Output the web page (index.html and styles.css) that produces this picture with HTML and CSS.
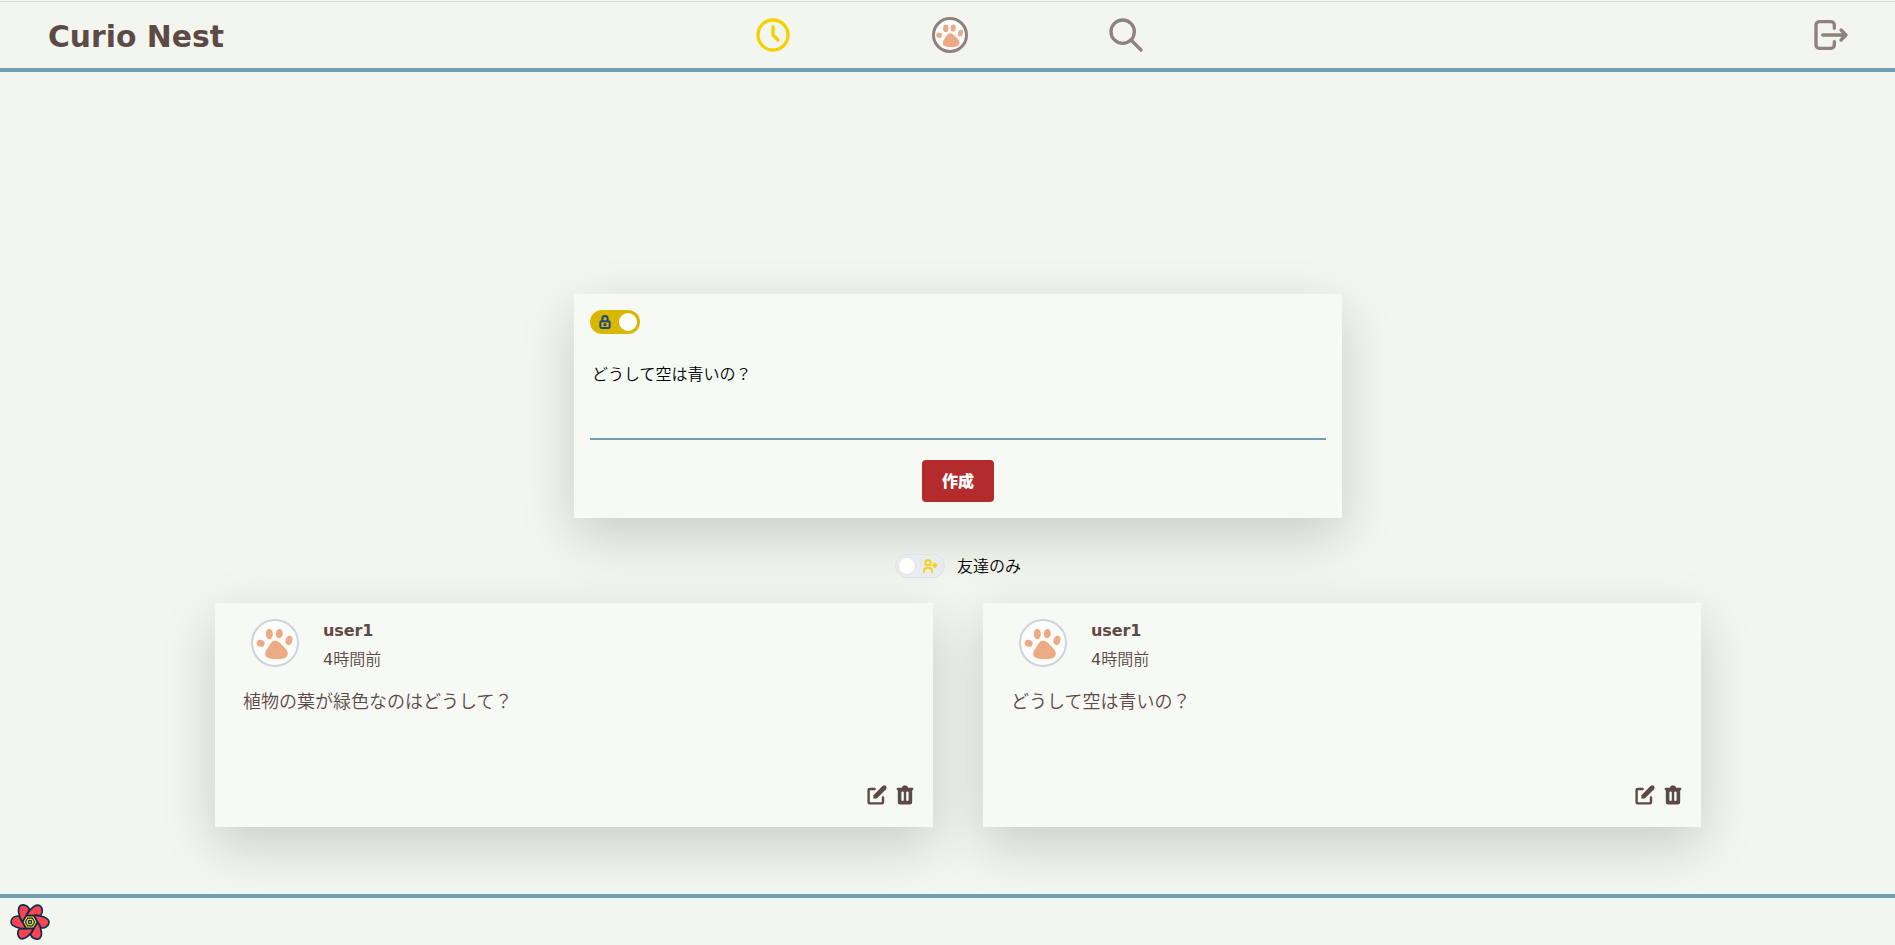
FILE: index.html
```html
<!DOCTYPE html>
<html lang="ja">
<head>
<meta charset="utf-8">
<title>Curio Nest</title>
<link rel="stylesheet" href="styles.css">
</head>
<body>
<svg class="defs" aria-hidden="true">
  <symbol id="paw" viewBox="0 0 144 144">
    <ellipse cx="29" cy="73" rx="12" ry="10.5" transform="rotate(20 29 73)"/>
    <ellipse cx="55" cy="45" rx="10.5" ry="15.5"/>
    <ellipse cx="85" cy="44" rx="10.5" ry="14" transform="rotate(8 85 44)"/>
    <ellipse cx="114" cy="64" rx="10" ry="14" transform="rotate(16 114 64)"/>
    <path d="M72 65C83 65 88 72 95 80C104 88 112 96 110 107C108 119 91 120 77 120C61 120 45 118 43 107C42 95 51 87 56 78C60 71 64 65 72 65Z"/>
  </symbol>
  <symbol id="edit" viewBox="0 0 20 20">
    <path d="M17.414 2.586a2 2 0 00-2.828 0L7 10.172V13h2.828l7.586-7.586a2 2 0 000-2.828z"/>
    <path d="M2 6a2 2 0 012-2h4a1 1 0 010 2H4v10h10v-4a1 1 0 112 0v4a2 2 0 01-2 2H4a2 2 0 01-2-2V6z"/>
  </symbol>
  <symbol id="trash" viewBox="0 0 20 20">
    <path fill-rule="evenodd" d="M9 2a1 1 0 00-.894.553L7.382 4H4a1 1 0 000 2v10a2 2 0 002 2h8a2 2 0 002-2V6a1 1 0 100-2h-3.382l-.724-1.447A1 1 0 0011 2H9zM7 8a1 1 0 012 0v6a1 1 0 11-2 0V8zm5-1a1 1 0 00-1 1v6a1 1 0 102 0V8a1 1 0 00-1-1z"/>
  </symbol>
</svg>

<header class="header">
  <h1 class="brand">Curio Nest</h1>
  <nav class="nav">
    <svg class="line-icon active" viewBox="0 0 24 24"><circle cx="12" cy="12" r="9"/><path d="M12 7v5l3 3"/></svg>
    <span class="avatar avatar-small"><svg><use href="#paw"/></svg></span>
    <svg class="line-icon" viewBox="0 0 24 24"><circle cx="10" cy="10" r="7"/><path d="M21 21l-6-6"/></svg>
  </nav>
  <svg class="line-icon logout" viewBox="0 0 24 24"><path d="M14 8V6a2 2 0 0 0-2-2H5a2 2 0 0 0-2 2v12a2 2 0 0 0 2 2h7a2 2 0 0 0 2-2v-2"/><path d="M7 12h14l-3-3m0 6l3-3"/></svg>
</header>

<main class="main">
  <form class="composer card">
    <div class="switch switch-on">
      <svg class="switch-icon" viewBox="0 0 24 24"><rect x="5" y="11" width="14" height="10" rx="2"/><circle cx="12" cy="16" r="1"/><path d="M8 11V7a4 4 0 0 1 8 0v4"/></svg>
      <span class="thumb"></span>
    </div>
    <div class="question-input">どうして空は青いの？</div>
    <button class="submit" type="button">作成</button>
  </form>

  <div class="filter">
    <div class="switch switch-off">
      <span class="thumb"></span>
      <svg class="switch-icon" viewBox="0 0 24 24"><circle cx="9" cy="7" r="4"/><path d="M3 21v-2a4 4 0 0 1 4-4h4a4 4 0 0 1 4 4v2M16 11h6m-3-3v6"/></svg>
    </div>
    <span class="filter-label">友達のみ</span>
  </div>

  <section class="posts">
    <article class="post card">
      <div class="post-head">
        <span class="avatar"><svg><use href="#paw"/></svg></span>
        <div class="author"><strong class="name">user1</strong><span class="time"><span class="count">4</span>時間前</span></div>
      </div>
      <p class="post-text">植物の葉が緑色なのはどうして？</p>
      <div class="actions"><svg><use href="#edit"/></svg><svg><use href="#trash"/></svg></div>
    </article>
    <article class="post card">
      <div class="post-head">
        <span class="avatar"><svg><use href="#paw"/></svg></span>
        <div class="author"><strong class="name">user1</strong><span class="time"><span class="count">4</span>時間前</span></div>
      </div>
      <p class="post-text">どうして空は青いの？</p>
      <div class="actions"><svg><use href="#edit"/></svg><svg><use href="#trash"/></svg></div>
    </article>
  </section>
</main>

<footer class="footer">
  <svg class="flower" viewBox="-61 -61 122 122">
    <defs><path id="petal" d="M-20 -12C-22 -34 -12 -57 0 -58C11 -58 20 -46 18 -34L0 -23Z"/></defs>
    <g fill="#ff4154" stroke="#00304a" stroke-width="5" stroke-linejoin="round" transform="rotate(30)">
      <use href="#petal"/><use href="#petal" transform="rotate(60)"/><use href="#petal" transform="rotate(120)"/>
      <use href="#petal" transform="rotate(180)"/><use href="#petal" transform="rotate(240)"/><use href="#petal" transform="rotate(300)"/>
    </g>
    <path d="M-22 0L-11 -19H11L22 0L11 19H-11Z" fill="#ffd94c" stroke="#002b3b" stroke-width="4"/>
    <path d="M-14 0L-7 -12H7L14 0L7 12H-7Z" fill="#ffd94c" stroke="#002b3b" stroke-width="3.5"/>
    <circle r="5" fill="#ffd94c" stroke="#002b3b" stroke-width="4"/>
  </svg>
</footer>
</body>
</html>
```
FILE: styles.css
```css
* { box-sizing: border-box; }

body {
  margin: 0;
  height: 945px;
  display: flex;
  flex-direction: column;
  overflow: hidden;
  background: #f3f6ef;
  color: #5d4a47;
  font-family: "DejaVu Sans", "Noto Sans CJK JP", sans-serif;
  font-size: 16px;
}

svg { display: block; }
.defs { position: absolute; width: 0; height: 0; }

.header {
  height: 71px;
  margin-top: 1px;
  padding: 0 44px 0 48px;
  display: grid;
  grid-template-columns: 1fr auto 1fr;
  align-items: center;
  border-top: 1px solid #d8dcd7;
  border-bottom: 4px solid #6f9fb0;
  flex: none;
}

.brand { margin: 0; padding-top: 4px; font-size: 29.8px; line-height: 40px; font-weight: 700; white-space: nowrap; }
.nav { display: flex; align-items: center; gap: 138.5px; }

.line-icon {
  width: 40px;
  height: 40px;
  fill: none;
  stroke: #8f817f;
  stroke-width: 2;
  stroke-linecap: round;
  stroke-linejoin: round;
}
.active { stroke: #f5d000; }
.logout { justify-self: end; }

.avatar {
  width: 48px;
  height: 48px;
  border: 2px solid #cfd3dd;
  border-radius: 50%;
  background: #fdfdfb;
  fill: #ecaa85;
  flex: none;
}
.avatar svg { width: 48px; height: 48px; margin: -2px; }
.avatar-small { width: 36px; height: 36px; border: 3px solid #8f817f; background: #fff; }
.avatar-small svg { width: 36px; height: 36px; margin: -3px; }

.main {
  flex: 1;
  display: flex;
  flex-direction: column;
  align-items: center;
  padding: 222px 0 0 21px;
}

.card { background: #f7f9f4; box-shadow: 0 18px 50px rgba(0, 0, 0, .168); }

.composer {
  width: 768px;
  height: 224px;
  padding: 16px;
  display: flex;
  flex-direction: column;
}

.switch {
  width: 50px;
  height: 24px;
  border-radius: 12px;
  display: flex;
  align-items: center;
}
.switch-on { background: #d9b600; padding: 0 3px 0 7px; justify-content: space-between; }
.switch-off {
  background: #e9ecef;
  border: 1px solid #dee2ea;
  padding: 0 6px 0 2px;
  justify-content: space-between;
}
.thumb { width: 18px; height: 18px; border-radius: 50%; background: #fff; }
.switch-off .thumb { border: 1px solid #e0e4ea; }
.switch-icon {
  width: 16px;
  height: 16px;
  fill: none;
  stroke: #1c4a80;
  stroke-width: 3;
  stroke-linecap: round;
  stroke-linejoin: round;
}
.switch-off .switch-icon { stroke: #f3cf20; }

.question-input {
  height: 90px;
  margin-top: 16px;
  padding: 11px 2px;
  border-bottom: 2px solid #6f9fb0;
  color: #000;
  font-family: "Noto Sans CJK JP", sans-serif;
  font-weight: 350;
  line-height: 24px;
}

.submit {
  width: 72px;
  height: 42px;
  margin: 20px auto 0;
  padding: 0 0 2px;
  border: 0;
  border-radius: 4px;
  background: #b32b2d;
  color: #fff;
  font: 900 16px/40px "Noto Sans CJK JP", sans-serif;
}

.filter { height: 24px; margin-top: 36px; width: 126px; display: flex; align-items: center; gap: 12px; z-index: 1; }
.filter .switch { flex: none; }
.filter-label {
  padding-bottom: 2px;
  color: #000;
  font-family: "Noto Sans CJK JP", sans-serif;
  font-weight: 350;
  line-height: 24px;
  white-space: nowrap;
}

.posts { margin-top: 25px; display: grid; grid-template-columns: 718px 718px; gap: 50px; }

.post { height: 224px; padding: 16px 16px 20px 28px; display: flex; flex-direction: column; }
.post-head { display: flex; gap: 24px; padding-left: 8px; }
.author { display: flex; flex-direction: column; gap: 5px; height: 48px; }
.name { font-size: 16px; line-height: 24px; letter-spacing: -.1px; }
.time { line-height: 24px; font-weight: 350; }
.count { font-weight: 400; }
.post-text {
  margin: 20px 0 0;
  font-family: "Noto Sans CJK JP", sans-serif;
  font-size: 18px;
  font-weight: 350;
  line-height: 27px;
}
.actions { display: flex; gap: 4px; margin-top: auto; justify-content: flex-end; fill: #5d4a47; }
.actions svg { width: 24px; height: 24px; }

.footer {
  position: relative;
  flex: none;
  height: 51px;
  padding: 4px 0 0 10px;
  border-top: 4px solid #6f9fb0;
  background: #f3f6ef;
}
.flower { width: 40px; height: 40px; }
```
